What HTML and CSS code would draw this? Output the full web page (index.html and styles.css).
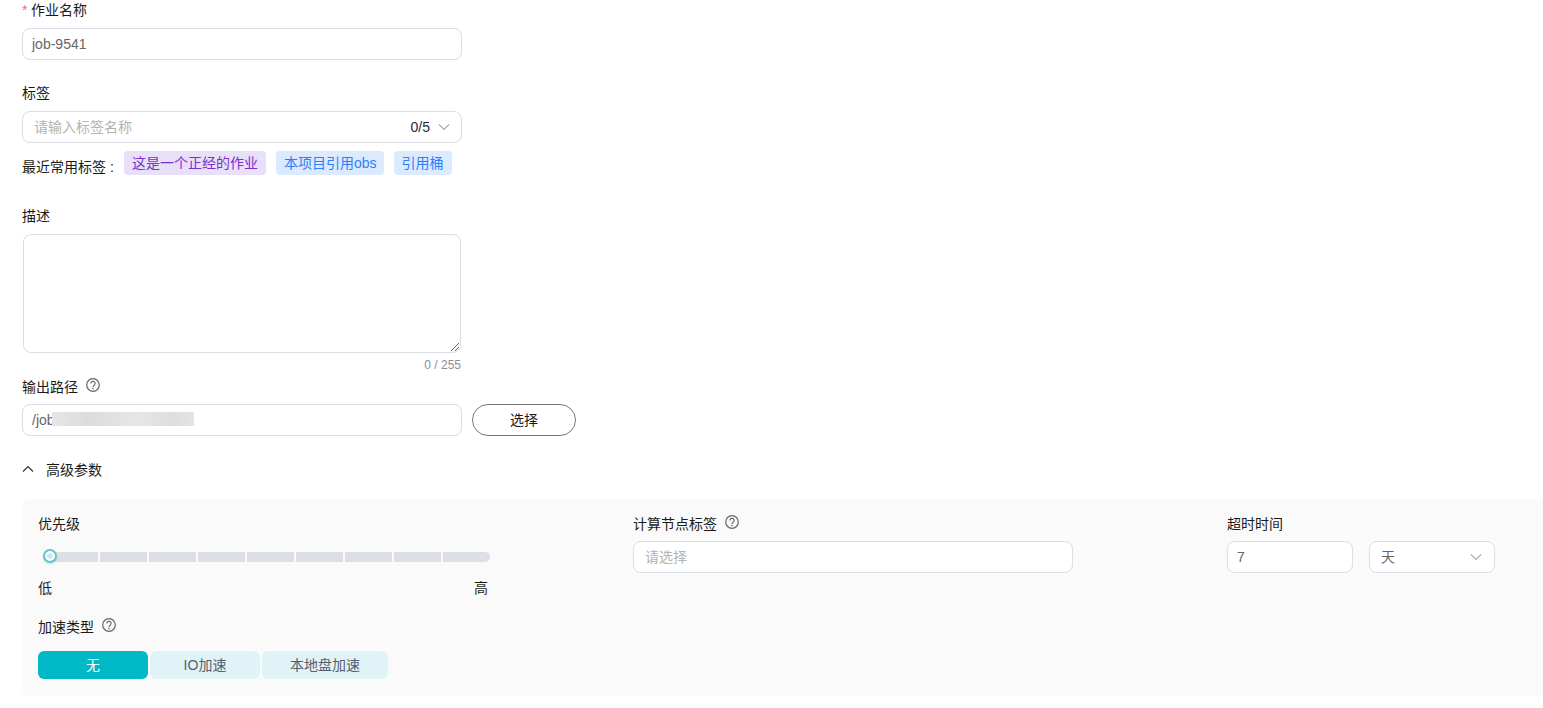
FILE: index.html
```html
<!DOCTYPE html>
<html lang="zh-CN">
<head>
    <meta charset="UTF-8">
    <title>作业配置</title>
    <link rel="stylesheet" href="styles.css">
</head>
<body>
    <div class="form-top">
        <div class="field-name">
            <div class="label"><span class="required">*</span>作业名称</div>
            <div class="input">job-9541</div>
        </div>
        <div class="field-tags">
            <div class="label">标签</div>
            <div class="input select">
                <span class="placeholder tag-placeholder">请输入标签名称</span>
                <span class="count">0/5</span>
                <svg class="chevron" width="12" height="12" viewBox="0 0 12 12"><path d="M1 3.5l5 5 5-5" fill="none" stroke="#a8abb3" stroke-width="1.1"/></svg>
            </div>
            <div class="recent">
                <span class="recent-label">最近常用标签 :</span>
                <span class="tag tag-purple">这是一个正经的作业</span>
                <span class="tag tag-blue tag-obs">本项目引用obs</span>
                <span class="tag tag-blue">引用桶</span>
            </div>
        </div>
        <div class="field-desc">
            <div class="label">描述</div>
            <div class="textarea">
                <svg class="resize" width="10" height="10" viewBox="0 0 10 10"><path d="M9 1L1 9M9 5L5 9" fill="none" stroke="#666" stroke-width="1"/></svg>
            </div>
            <div class="counter">0 / 255</div>
        </div>
        <div class="field-path">
            <div class="label">输出路径
                <svg class="help" width="14" height="14" viewBox="0 0 14 14"><circle cx="7" cy="7" r="6.3" fill="none" stroke="#666" stroke-width="1.2"/><path d="M4.9 5.4a2.1 2.1 0 1 1 3.2 1.8c-.8.4-1.1.8-1.1 1.7" fill="none" stroke="#666" stroke-width="1.2"/><circle cx="7" cy="10.6" r=".8" fill="#666"/></svg>
            </div>
            <div class="path-row">
                <div class="input path-input">/job<span class="redacted"></span></div>
                <div class="btn-select">选择</div>
            </div>
        </div>
    </div>

    <div class="advanced-title">
        <svg width="12" height="12" viewBox="0 0 12 12"><path d="M1 8.5l5-5 5 5" fill="none" stroke="#333" stroke-width="1.2"/></svg>
        <span>高级参数</span>
    </div>

    <div class="panel">
        <div class="panel-grid">
            <div class="col">
                <div class="label">优先级</div>
                <div class="slider">
                    <div class="track">
                        <span class="seg"></span><span class="seg"></span><span class="seg"></span>
                        <span class="seg"></span><span class="seg"></span><span class="seg"></span>
                        <span class="seg"></span><span class="seg"></span><span class="seg"></span>
                    </div>
                    <span class="thumb"></span>
                </div>
                <div class="slider-ends"><span>低</span><span>高</span></div>
            </div>
            <div class="col">
                <div class="label">计算节点标签
                    <svg class="help" width="14" height="14" viewBox="0 0 14 14"><circle cx="7" cy="7" r="6.3" fill="none" stroke="#666" stroke-width="1.2"/><path d="M4.9 5.4a2.1 2.1 0 1 1 3.2 1.8c-.8.4-1.1.8-1.1 1.7" fill="none" stroke="#666" stroke-width="1.2"/><circle cx="7" cy="10.6" r=".8" fill="#666"/></svg>
                </div>
                <div class="input node-input"><span class="placeholder">请选择</span></div>
            </div>
            <div class="col">
                <div class="label">超时时间</div>
                <div class="timeout-row">
                    <div class="input timeout-num">7</div>
                    <div class="input select timeout-unit">
                        <span class="unit-text">天</span>
                        <svg class="chevron" width="12" height="12" viewBox="0 0 12 12"><path d="M1 3.5l5 5 5-5" fill="none" stroke="#a8abb3" stroke-width="1.1"/></svg>
                    </div>
                </div>
            </div>
        </div>
        <div class="accel">
            <div class="label">加速类型
                <svg class="help" width="14" height="14" viewBox="0 0 14 14"><circle cx="7" cy="7" r="6.3" fill="none" stroke="#666" stroke-width="1.2"/><path d="M4.9 5.4a2.1 2.1 0 1 1 3.2 1.8c-.8.4-1.1.8-1.1 1.7" fill="none" stroke="#666" stroke-width="1.2"/><circle cx="7" cy="10.6" r=".8" fill="#666"/></svg>
            </div>
            <div class="accel-btns">
                <div class="accel-btn active">无</div>
                <div class="accel-btn">IO加速</div>
                <div class="accel-btn wide">本地盘加速</div>
            </div>
        </div>
    </div>
</body>
</html>
```

FILE: styles.css
```css
* {
    box-sizing: border-box;
}
body {
    margin: 0;
    padding: 0 0 12px 22px;
    background-color: #fff;
    font-family: "Liberation Sans", "Noto Sans CJK SC", sans-serif;
    font-size: 14px;
    color: #1a1a1a;
    overflow-x: hidden;
}
.form-top {
    width: 440px;
}
.label {
    height: 20px;
    line-height: 20px;
    display: flex;
    align-items: center;
}
.label .help {
    margin-left: 8px;
    margin-top: -5px;
}
.required {
    color: #f66f6a;
    width: 9px;
}
.input {
    height: 32px;
    line-height: 30px;
    border: 1px solid #dcdde6;
    border-radius: 8px;
    background-color: #fff;
    padding: 0 9px;
    color: #666;
}
.placeholder {
    color: #b3b3b3;
}
.select {
    display: flex;
    align-items: center;
    padding-right: 11px;
}
.chevron {
    margin-left: 8px;
    flex-shrink: 0;
}
.tag-placeholder {
    flex: 1;
    padding-left: 2px;
}
.count {
    color: #252b3a;
}
.field-name .label,
.field-tags .label,
.field-desc .label {
    margin-bottom: 8px;
}
.field-tags {
    margin-top: 23px;
}
.recent {
    display: flex;
    align-items: flex-start;
    margin-top: 8px;
}
.recent-label {
    flex-shrink: 0;
    width: 102px;
    height: 32px;
    line-height: 32px;
    white-space: nowrap;
}
.tag {
    height: 24px;
    line-height: 24px;
    padding: 0 8px;
    border-radius: 4px;
    margin-right: 10px;
    white-space: nowrap;
}
.tag:last-child {
    margin-right: 0;
}
.tag-purple {
    background-color: #e8e0f8;
    color: #7a2fcf;
}
.tag-blue {
    background-color: #dbeafe;
    color: #2a7fff;
}
.tag-obs {
    padding-right: 7px;
}
.field-desc {
    margin-top: 23px;
}
.textarea {
    position: relative;
    margin: 0 1px;
    height: 119px;
    border: 1px solid #dcdde6;
    border-radius: 8px;
}
.resize {
    position: absolute;
    right: 0;
    bottom: 0;
}
.counter {
    height: 24px;
    line-height: 24px;
    text-align: right;
    padding-right: 1px;
    font-size: 12px;
    color: #8a8e99;
}
.field-path .label {
    margin-bottom: 7px;
}
.path-row {
    display: flex;
    align-items: center;
}
.path-input {
    width: 440px;
    flex-shrink: 0;
    display: flex;
}
.redacted {
    display: block;
    width: 142px;
    height: 14px;
    margin: 7px 0 0 -3px;
    background: linear-gradient(90deg, #e6e6e6, #dcdcdc 25%, #e6e6e6 60%, #dedede 85%, #e4e4e4);
}
.btn-select {
    flex-shrink: 0;
    width: 104px;
    height: 32px;
    line-height: 30px;
    margin-left: 10px;
    text-align: center;
    border: 1px solid #777;
    border-radius: 16px;
}
.advanced-title {
    display: flex;
    align-items: center;
    height: 20px;
    margin-top: 23px;
    gap: 12px;
}
.panel {
    margin-top: 20px;
    width: 1521px;
    height: 197px;
    padding: 15px 16px 0;
    background-color: #fafafa;
    border-radius: 8px 0 0 8px;
}
.panel-grid {
    display: grid;
    grid-template-columns: 595px 594px 1fr;
}
.slider {
    position: relative;
    width: 452px;
    height: 10px;
    margin-top: 18px;
    padding-left: 13px;
}
.track {
    display: flex;
    gap: 2px;
    height: 10px;
    border-radius: 0 5px 5px 0;
    overflow: hidden;
}
.seg {
    flex: 1;
    background-color: #dcdfe6;
}
.thumb {
    position: absolute;
    left: 5px;
    top: -3px;
    width: 14px;
    height: 14px;
    border: 2px solid #5cc6cf;
    border-radius: 50%;
    background: radial-gradient(circle, #cfe6ea 0 2.5px, #fff 3px);
    box-shadow: 0 1px 2px rgba(0, 0, 0, 0.15);
}
.slider-ends {
    display: flex;
    justify-content: space-between;
    width: 450px;
    margin-top: 16px;
    height: 20px;
    line-height: 20px;
}
.col .label {
    margin-bottom: 7px;
}
.col:first-child .label {
    margin-bottom: 0;
}
.node-input {
    width: 440px;
    padding-left: 11px;
}
.timeout-row {
    display: flex;
    gap: 16px;
}
.timeout-num {
    width: 126px;
}
.timeout-unit {
    width: 126px;
    padding: 0 12px 0 11px;
}
.unit-text {
    flex: 1;
}
.accel {
    margin-top: 19px;
}
.accel .label {
    margin-bottom: 14px;
}
.accel-btns {
    display: flex;
    gap: 2px;
}
.accel-btn {
    width: 110px;
    height: 28px;
    line-height: 28px;
    text-align: center;
    border-radius: 6px;
    background-color: #e0f3f6;
    color: #575d6c;
}
.accel-btn.wide {
    width: 126px;
}
.accel-btn.active {
    background-color: #00b8c6;
    color: #fff;
}
```
